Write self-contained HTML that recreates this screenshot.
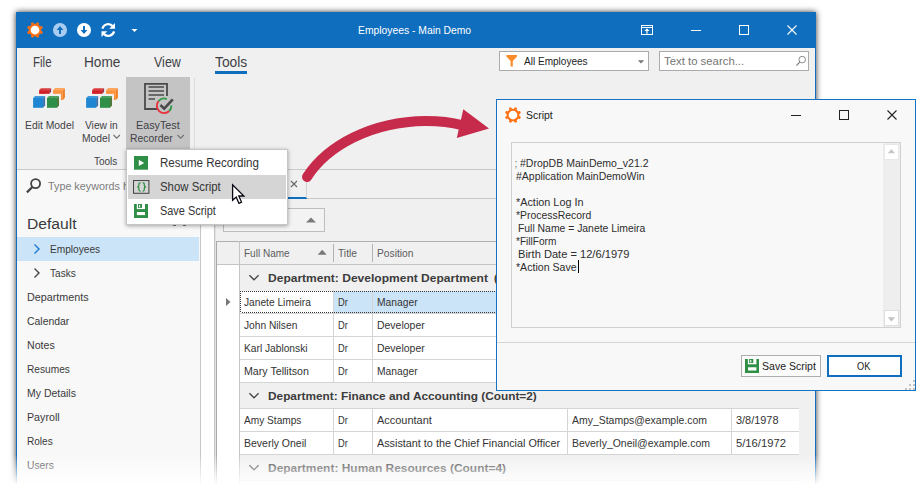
<!DOCTYPE html>
<html><head><meta charset="utf-8">
<style>
*{box-sizing:border-box;margin:0;padding:0}
html,body{width:923px;height:491px;overflow:hidden;background:#fff}
body{position:relative;font-family:"Liberation Sans",sans-serif;font-size:11px;color:#3b3b3b}
.a{position:absolute}
.t{position:absolute;white-space:nowrap;line-height:20px;height:20px;transform-origin:0 0}
#win{position:absolute;left:16px;top:12px;width:800px;height:500px;background:#f0f0f0;border-left:1px solid #106ebe;border-right:1px solid #106ebe;box-shadow:0 0 6px 0 rgba(0,0,0,.8)}
#tb{position:absolute;left:17px;top:12px;width:798px;height:36px;background:#106ebe}
.rt{font-size:13.5px;color:#333;letter-spacing:-.3px}
.rb{font-size:12px;color:#404040;letter-spacing:-.25px}
.nv{font-size:11.5px;color:#3a3a3a;letter-spacing:-.1px}
.g{font-size:11px;color:#333}
.gh{font-size:11px;color:#555}
.gb{font-size:11.5px;font-weight:bold;color:#3c3c3c}
.hl{position:absolute;height:1px;background:#d4d4d4}
.vl{position:absolute;width:1px;background:#d4d4d4}
#fade{position:absolute;left:0;top:454px;width:923px;height:37px;background:linear-gradient(to bottom,rgba(255,255,255,0) 0,rgba(255,255,255,1) 84%)}
</style></head><body>
<div id="win"></div>
<div id="tb"></div>
<!-- TITLEBAR -->

<svg class="a" style="left:24px;top:18px" width="130" height="24" viewBox="0 0 130 24">
 <!-- sun/gear -->
 <g transform="translate(11,12)"><circle r="5.350" fill="#fff" stroke="#ff6f10" stroke-width="1.950"/><g fill="#ff6f10"><polygon points="-1.600,-6 -1.050,-8.050 1.050,-8.050 1.600,-6" transform="rotate(22.5)"/><polygon points="-1.600,-6 -1.050,-8.050 1.050,-8.050 1.600,-6" transform="rotate(67.5)"/><polygon points="-1.600,-6 -1.050,-8.050 1.050,-8.050 1.600,-6" transform="rotate(112.5)"/><polygon points="-1.600,-6 -1.050,-8.050 1.050,-8.050 1.600,-6" transform="rotate(157.5)"/><polygon points="-1.600,-6 -1.050,-8.050 1.050,-8.050 1.600,-6" transform="rotate(202.5)"/><polygon points="-1.600,-6 -1.050,-8.050 1.050,-8.050 1.600,-6" transform="rotate(247.5)"/><polygon points="-1.600,-6 -1.050,-8.050 1.050,-8.050 1.600,-6" transform="rotate(292.5)"/><polygon points="-1.600,-6 -1.050,-8.050 1.050,-8.050 1.600,-6" transform="rotate(337.5)"/></g></g>
 <!-- up (disabled) -->
 <circle cx="36" cy="12" r="7" fill="#a9cdf0"/>
 <path d="M36 16V11" stroke="#106ebe" stroke-width="2" fill="none"/><polygon points="32.600,12 36,8 39.400,12" fill="#106ebe"/>
 <!-- down -->
 <circle cx="60" cy="12" r="7" fill="#fff"/>
 <path d="M60 8V13" stroke="#106ebe" stroke-width="2" fill="none"/><polygon points="56.600,12 60,16 63.400,12" fill="#106ebe"/>
 <!-- refresh -->
 <g fill="none" stroke="#fff" stroke-width="2.200"><path d="M78.400 10.600A6 6 0 0 1 88.800 8.300"/><path d="M90.100 13.400A6 6 0 0 1 79.700 15.700"/></g>
 <polygon points="91,5 91,10.800 85.200,10.800" fill="#fff"/><polygon points="77.500,19 77.500,13.200 83.300,13.200" fill="#fff"/>
 <!-- dropdown -->
 <polygon points="107.5,11 113.5,11 110.5,14" fill="#fff"/>
</svg>
<svg class="a" style="left:636px;top:18px" width="170" height="24" viewBox="0 0 170 24" fill="none" stroke="#fff">
 <rect x="5.500" y="7.500" width="11" height="9" stroke-width="1"/><path d="M5.500 9.500H16.500" stroke-width="1"/><path d="M11 15.800V11.500" stroke-width="1.200"/><polygon points="8.400,13 11,10.300 13.600,13" fill="#fff" stroke="none"/>
 <path d="M55 12.5H65" stroke-width="1"/>
 <rect x="103.5" y="7.5" width="9" height="9" stroke-width="1"/>
 <path d="M151.5 7.5L160.5 16.5M160.5 7.5L151.5 16.5" stroke-width="1.1"/>
</svg>
<!-- RIBBON TABS -->




<div class="a" style="left:215px;top:71px;width:32px;height:3px;background:#106ebe"></div>
<!-- filter combobox -->
<div class="a" style="left:499px;top:51px;width:150px;height:20px;background:#fff;border:1px solid #ababab"></div>
<svg class="a" style="left:505px;top:54px" width="14" height="14" viewBox="0 0 14 14"><path d="M1.400 1H12V2.600L7.800 7V12.600H5.600V7L1.400 2.600Z" fill="#f98b2c"/></svg>

<svg class="a" style="left:636px;top:58px" width="10" height="8"><polygon points="1.800,2.300 8.200,2.300 5,5.500" fill="#777"/></svg>
<!-- search box -->
<div class="a" style="left:659px;top:51px;width:150px;height:20px;background:#fff;border:1px solid #ababab"></div>

<svg class="a" style="left:794px;top:54px" width="14" height="14" viewBox="0 0 14 14" fill="none" stroke="#8a8a8a" stroke-width="1"><circle cx="8.200" cy="5.600" r="3.300"/><path d="M5.800 8L2.400 11.600" stroke-width="1.300"/></svg>
<!-- RIBBON BUTTONS -->
<div class="a" style="left:126px;top:77px;width:64px;height:72px;background:#c4c4c4"></div>
<div class="vl" style="left:194px;top:78px;height:88px;background:#dcdcdc"></div>






<svg class="a" style="left:112px;top:133px" width="10" height="8" fill="none" stroke="#707070" stroke-width="1.1"><path d="M1.5 2L4.7 5.2L7.9 2"/></svg>
<svg class="a" style="left:176px;top:133px" width="10" height="8" fill="none" stroke="#707070" stroke-width="1.1"><path d="M1.5 2L4.7 5.2L7.9 2"/></svg>
<!-- cubes icons -->
<svg class="a" style="left:32px;top:87px" width="34" height="22" viewBox="0 0 34 22" id="cube1">
 <g id="cubes">
<polygon points="7.1,3.1 9.0,1.2000000000000002 19.099999999999998,1.2000000000000002 17.2,3.1" fill="#da3d3c"/><polygon points="17.2,3.1 19.099999999999998,1.3000000000000003 19.099999999999998,4.8 17.2,6.9" fill="#a3283b"/><rect x="7.1" y="3.1" width="10.10" height="3.80" fill="#d01f26"/>
<polygon points="21.1,3.1 23.1,1.1 32.9,1.1 30.9,3.1" fill="#fda65c"/><polygon points="30.9,3.1 32.9,1.2000000000000002 32.9,10.8 30.9,13" fill="#f07f2a"/><rect x="21.1" y="3.1" width="9.80" height="9.90" fill="#fb933c"/>
<rect x="13.500" y="6.900" width="15.400" height="2.600" fill="#f0f0f0"/><rect x="26.500" y="6.900" width="2.400" height="12.500" fill="#f0f0f0"/>
<polygon points="1.1,20.8 1.1,11 3.1,9 13.1,9 13.1,18.6 11.1,20.8" fill="#f0f0f0" stroke="#f0f0f0" stroke-width="2.200" stroke-linejoin="round"/><polygon points="1.1,11 3.1,9 13.1,9 11.1,11" fill="#3d99dc"/><polygon points="11.1,11 13.1,9.1 13.1,18.6 11.1,20.8" fill="#3a70a8"/><rect x="1.1" y="11" width="10.00" height="9.80" fill="#1f87d1"/>
<polygon points="15,20.8 15,11 17,9 27,9 27,18.6 25,20.8" fill="#f0f0f0" stroke="#f0f0f0" stroke-width="2.200" stroke-linejoin="round"/><polygon points="15,11 17,9 27,9 25,11" fill="#4ba25e"/><polygon points="25,11 27,9.1 27,18.6 25,20.8" fill="#4f7a3c"/><rect x="15" y="11" width="10.00" height="9.80" fill="#2f8f48"/>
 </g>
</svg>
<svg class="a" style="left:85px;top:87px" width="34" height="22" viewBox="0 0 34 22"><use href="#cubes"/></svg>
<!-- easytest icon -->
<svg class="a" style="left:140px;top:80px" width="36" height="36" viewBox="0 0 36 36" fill="none">
 <path d="M17 29H5V3.800H27V16" stroke="#4a4a4a" stroke-width="1.800"/>
 <path d="M8.500 7H24M8.500 11H24M8.500 15H24M8.500 19H15" stroke="#4a4a4a" stroke-width="1.700"/>
 <path d="M29.26 30.96A7.3 7.3 0 0 1 18.59 21.01" stroke="#e8323c" stroke-width="1.900"/>
 <path d="M18.59 21.01A7.3 7.3 0 0 1 26.83 19.03" stroke="#2f9a48" stroke-width="1.900"/>
 <path d="M31.40 25.55A7.3 7.3 0 0 1 29.26 30.96" stroke="#2f9a48" stroke-width="1.900"/>
 <path d="M20.400 25L24.200 28.600L32.800 19.400" stroke="#4a4a4a" stroke-width="2.600"/>
</svg>
<div class="hl" style="left:17px;top:169px;width:798px;background:#c9c9c9"></div>
<!-- NAV PANEL -->
<div class="a" style="left:17px;top:170px;width:183px;height:330px;background:#f8f8f8"></div>
<div class="vl" style="left:200px;top:170px;height:330px;background:#c6c6c6"></div>
<div class="a" style="left:201px;top:170px;width:13px;height:330px;background:#fff"></div>
<div class="vl" style="left:214px;top:170px;height:330px;background:#c6c6c6"></div>
<div class="vl" style="left:215px;top:170px;height:330px;background:#e2e2e2"></div>
<svg class="a" style="left:25px;top:177px" width="18" height="18" viewBox="0 0 18 18" fill="none" stroke="#444" stroke-width="1.800"><circle cx="10.600" cy="6.600" r="4.500"/><path d="M7.400 10L1.900 15.400" stroke-width="2.300"/></svg>


<div class="a" style="left:17px;top:237px;width:182px;height:24px;background:#cce4f7"></div>
<svg class="a" style="left:32px;top:243px" width="10" height="12" fill="none" stroke="#1b7ad3" stroke-width="1.4"><path d="M2.5 1.5L7 6L2.5 10.5"/></svg>
<svg class="a" style="left:32px;top:267px" width="10" height="12" fill="none" stroke="#444" stroke-width="1.4"><path d="M2.5 1.5L7 6L2.5 10.5"/></svg>










<!-- DOC AREA -->
<div class="hl" style="left:216px;top:198px;width:599px;background:#c9c9c9"></div>
<div class="a" style="left:216px;top:197px;width:91px;height:2px;background:#106ebe"></div>
<div class="vl" style="left:306px;top:172px;height:26px;background:#d0d0d0"></div>
<svg class="a" style="left:289px;top:179px" width="10" height="10" fill="none" stroke="#666" stroke-width="1.1"><path d="M2 2L8 8M8 2L2 8"/></svg>
<div class="a" style="left:223px;top:208px;width:102px;height:24px;border:1px solid #bdbdbd;background:#f3f3f3"></div>
<svg class="a" style="left:305px;top:216px" width="12" height="8"><polygon points="1,6.5 11,6.5 6,1.5" fill="#7a7a7a"/></svg>
<!-- GRID -->
<div class="a" style="left:217px;top:241px;width:582px;height:260px;background:#fff"></div>
<div class="a" style="left:217px;top:241px;width:582px;height:23px;background:#f0f0f0"></div>
<div class="a" style="left:217px;top:264px;width:23px;height:240px;background:#fff"></div>
<div class="a" style="left:240px;top:264px;width:559px;height:27px;background:#f0f0f0"></div>
<div class="a" style="left:240px;top:382px;width:559px;height:26px;background:#f0f0f0"></div>
<div class="a" style="left:240px;top:454px;width:559px;height:26px;background:#f0f0f0"></div>
<div class="a" style="left:333px;top:291px;width:466px;height:22px;background:#cce4f7"></div>
<div class="hl" style="left:217px;top:241px;width:582px;background:#b0b0b0"></div>
<div class="hl" style="left:217px;top:264px;width:582px;background:#c4c4c4"></div>
<div class="hl" style="left:240px;top:313px;width:559px"></div>
<div class="hl" style="left:240px;top:336px;width:559px"></div>
<div class="hl" style="left:240px;top:359px;width:559px"></div>
<div class="hl" style="left:240px;top:382px;width:559px"></div>
<div class="hl" style="left:240px;top:408px;width:559px"></div>
<div class="hl" style="left:240px;top:431px;width:559px"></div>
<div class="hl" style="left:240px;top:454px;width:559px"></div>
<div class="hl" style="left:240px;top:480px;width:559px"></div>
<div class="vl" style="left:216px;top:241px;height:260px;background:#a9a9a9"></div>
<div class="vl" style="left:239px;top:241px;height:260px;background:#c4c4c4"></div>
<div class="vl" style="left:333px;top:244px;height:18px;background:#b2b2b2"></div>
<div class="vl" style="left:372px;top:244px;height:18px;background:#b2b2b2"></div>
<div class="vl" style="left:333px;top:290px;height:92px"></div>
<div class="vl" style="left:372px;top:290px;height:92px"></div>
<div class="vl" style="left:333px;top:408px;height:46px"></div>
<div class="vl" style="left:372px;top:408px;height:46px"></div>
<div class="vl" style="left:567px;top:408px;height:46px"></div>
<div class="vl" style="left:731px;top:408px;height:46px"></div>
<div class="a" style="left:240px;top:291px;width:559px;height:1px;background:repeating-linear-gradient(to right,#3a3a3a 0 1px,transparent 1px 2px)"></div>
<div class="a" style="left:240px;top:312px;width:559px;height:1px;background:repeating-linear-gradient(to right,#3a3a3a 0 1px,transparent 1px 2px)"></div>
<div class="a" style="left:240px;top:291px;width:1px;height:22px;background:repeating-linear-gradient(to bottom,#3a3a3a 0 1px,#fff 1px 2px)"></div>
<svg class="a" style="left:224px;top:297px" width="8" height="10"><polygon points="2,1 6.5,5 2,9" fill="#777"/></svg>
<svg class="a" style="left:317px;top:248px" width="12" height="8"><polygon points=".700,6.800 9.700,6.800 5.200,1.800" fill="#777"/></svg>



<svg class="a" style="left:248px;top:273px" width="12" height="10" fill="none" stroke="#444" stroke-width="1.300"><path d="M1.400 2.200L6 6.800L10.600 2.200"/></svg>
<svg class="a" style="left:248px;top:391px" width="12" height="10" fill="none" stroke="#444" stroke-width="1.300"><path d="M1.400 2.200L6 6.800L10.600 2.200"/></svg>
<svg class="a" style="left:248px;top:463px" width="12" height="10" fill="none" stroke="#444" stroke-width="1.300"><path d="M1.400 2.200L6 6.800L10.600 2.200"/></svg>









<div class="a" style="left:173px;top:225px;width:3px;height:1px;background:#777"></div><div class="a" style="left:183px;top:225px;width:3px;height:1px;background:#777"></div>
<div class="t" style="left:358.00px;top:20.19px;font-size:11.0px;color:#fff;transform:scaleX(0.9392)">Employees - Main Demo</div>
<div class="t" style="left:32.61px;top:51.98px;font-size:14.5px;color:#3f3f46;transform:scaleX(0.7937)">File</div>
<div class="t" style="left:84.06px;top:51.98px;font-size:14.5px;color:#3f3f46;transform:scaleX(0.9411)">Home</div>
<div class="t" style="left:153.90px;top:51.98px;font-size:14.5px;color:#3f3f46;transform:scaleX(0.8613)">View</div>
<div class="t" style="left:215.00px;top:51.98px;font-size:14.5px;color:#3f3f46;transform:scaleX(0.9524)">Tools</div>
<div class="t" style="left:523.80px;top:51.19px;font-size:11.0px;color:#222;transform:scaleX(0.9132)">All Employees</div>
<div class="t" style="left:663.90px;top:51.19px;font-size:11.0px;color:#757575;transform:scaleX(1.0324)">Text to search...</div>
<div class="t" style="left:24.80px;top:115.11px;font-size:11.8px;color:#3f3f46;transform:scaleX(0.8782)">Edit Model</div>
<div class="t" style="left:84.90px;top:115.11px;font-size:11.8px;color:#3f3f46;transform:scaleX(0.8643)">View in</div>
<div class="t" style="left:81.80px;top:128.21px;font-size:11.8px;color:#3f3f46;transform:scaleX(0.8728)">Model</div>
<div class="t" style="left:135.60px;top:115.11px;font-size:11.8px;color:#3f3f46;transform:scaleX(0.9118)">EasyTest</div>
<div class="t" style="left:129.70px;top:128.21px;font-size:11.8px;color:#3f3f46;transform:scaleX(0.8788)">Recorder</div>
<div class="t" style="left:93.70px;top:150.91px;font-size:11.8px;color:#3f3f46;transform:scaleX(0.8466)">Tools</div>
<div class="t" style="left:48.10px;top:175.91px;font-size:11.8px;color:#7c7c7c;transform:scaleX(0.9141)">Type keywords here</div>
<div class="t" style="left:26.56px;top:214.17px;font-size:15.1px;color:#3a3a3a;transform:scaleX(1.0351)">Default</div>
<div class="t" style="left:49.50px;top:239.19px;font-size:11.0px;color:#3a3a3a;transform:scaleX(0.9214)">Employees</div>
<div class="t" style="left:50.00px;top:263.19px;font-size:11.0px;color:#3a3a3a;transform:scaleX(0.9155)">Tasks</div>
<div class="t" style="left:26.60px;top:287.19px;font-size:11.0px;color:#3a3a3a;transform:scaleX(0.9784)">Departments</div>
<div class="t" style="left:26.60px;top:311.19px;font-size:11.0px;color:#3a3a3a;transform:scaleX(0.9472)">Calendar</div>
<div class="t" style="left:26.60px;top:335.19px;font-size:11.0px;color:#3a3a3a;transform:scaleX(0.9646)">Notes</div>
<div class="t" style="left:26.60px;top:359.19px;font-size:11.0px;color:#3a3a3a;transform:scaleX(0.9242)">Resumes</div>
<div class="t" style="left:26.60px;top:383.19px;font-size:11.0px;color:#3a3a3a;transform:scaleX(0.9529)">My Details</div>
<div class="t" style="left:26.60px;top:407.19px;font-size:11.0px;color:#3a3a3a;transform:scaleX(0.9705)">Payroll</div>
<div class="t" style="left:26.60px;top:431.19px;font-size:11.0px;color:#3a3a3a;transform:scaleX(0.9153)">Roles</div>
<div class="t" style="left:26.60px;top:455.19px;font-size:11.0px;color:#3a3a3a;transform:scaleX(0.9376)">Users</div>
<div class="t" style="left:243.70px;top:243.19px;font-size:11.0px;color:#5c5c5c;transform:scaleX(0.9099)">Full Name</div>
<div class="t" style="left:338.20px;top:243.19px;font-size:11.0px;color:#5c5c5c;transform:scaleX(0.9282)">Title</div>
<div class="t" style="left:376.60px;top:243.19px;font-size:11.0px;color:#5c5c5c;transform:scaleX(0.9329)">Position</div>
<div class="t" style="left:268.30px;top:268.19px;font-size:11.0px;color:#3c3c3c;transform:scaleX(1.0937);font-weight:700">Department: Development Department</div>
<div class="t" style="left:493.80px;top:268.19px;font-size:11.0px;color:#3c3c3c;transform:scaleX(1.0044);font-weight:700">(Count=4)</div>
<div class="t" style="left:268.30px;top:386.19px;font-size:11.0px;color:#3c3c3c;transform:scaleX(1.0758);font-weight:700">Department: Finance and Accounting (Count=2)</div>
<div class="t" style="left:268.30px;top:458.19px;font-size:11.0px;color:#3c3c3c;transform:scaleX(1.0863);font-weight:700">Department: Human Resources (Count=4)</div>
<div class="t" style="left:244.30px;top:292.19px;font-size:11.0px;color:#333;transform:scaleX(0.9270)">Janete Limeira</div>
<div class="t" style="left:338.20px;top:292.19px;font-size:11.0px;color:#333;transform:scaleX(0.8456)">Dr</div>
<div class="t" style="left:376.60px;top:292.19px;font-size:11.0px;color:#333;transform:scaleX(0.9348)">Manager</div>
<div class="t" style="left:244.30px;top:315.19px;font-size:11.0px;color:#333;transform:scaleX(0.9275)">John Nilsen</div>
<div class="t" style="left:338.20px;top:315.19px;font-size:11.0px;color:#333;transform:scaleX(0.8456)">Dr</div>
<div class="t" style="left:376.60px;top:315.19px;font-size:11.0px;color:#333;transform:scaleX(0.9509)">Developer</div>
<div class="t" style="left:244.30px;top:338.19px;font-size:11.0px;color:#333;transform:scaleX(0.9275)">Karl Jablonski</div>
<div class="t" style="left:338.20px;top:338.19px;font-size:11.0px;color:#333;transform:scaleX(0.8456)">Dr</div>
<div class="t" style="left:376.60px;top:338.19px;font-size:11.0px;color:#333;transform:scaleX(0.9509)">Developer</div>
<div class="t" style="left:244.30px;top:361.19px;font-size:11.0px;color:#333;transform:scaleX(0.9669)">Mary Tellitson</div>
<div class="t" style="left:338.20px;top:361.19px;font-size:11.0px;color:#333;transform:scaleX(0.8456)">Dr</div>
<div class="t" style="left:376.60px;top:361.19px;font-size:11.0px;color:#333;transform:scaleX(0.9348)">Manager</div>
<div class="t" style="left:244.30px;top:410.19px;font-size:11.0px;color:#333;transform:scaleX(0.9213)">Amy Stamps</div>
<div class="t" style="left:338.20px;top:410.19px;font-size:11.0px;color:#333;transform:scaleX(0.8456)">Dr</div>
<div class="t" style="left:376.60px;top:410.19px;font-size:11.0px;color:#333;transform:scaleX(0.9967)">Accountant</div>
<div class="t" style="left:571.70px;top:410.19px;font-size:11.0px;color:#333;transform:scaleX(0.9505)">Amy_Stamps@example.com</div>
<div class="t" style="left:736.40px;top:410.19px;font-size:11.0px;color:#333;transform:scaleX(0.9930)">3/8/1978</div>
<div class="t" style="left:244.30px;top:433.19px;font-size:11.0px;color:#333;transform:scaleX(0.9527)">Beverly Oneil</div>
<div class="t" style="left:338.20px;top:433.19px;font-size:11.0px;color:#333;transform:scaleX(0.8456)">Dr</div>
<div class="t" style="left:376.60px;top:433.19px;font-size:11.0px;color:#333;transform:scaleX(0.9828)">Assistant to the Chief Financial Officer</div>
<div class="t" style="left:571.70px;top:433.19px;font-size:11.0px;color:#333;transform:scaleX(0.9510)">Beverly_Oneil@example.com</div>
<div class="t" style="left:736.40px;top:433.19px;font-size:11.0px;color:#333;transform:scaleX(1.0201)">5/16/1972</div>
<!-- POPUP MENU -->
<div class="a" style="left:126px;top:149px;width:162px;height:76px;background:#fff;border:1px solid #c6c6c6;box-shadow:0 1px 4px rgba(0,0,0,.35)"></div>
<div class="a" style="left:128px;top:175px;width:158px;height:24px;background:#d5d5d5"></div>
<svg class="a" style="left:134px;top:156px" width="14" height="14"><rect width="14" height="13.700" fill="#2f8f46"/><polygon points="4.800,3.800 10.200,6.900 4.800,10" fill="#fff"/></svg>
<svg class="a" style="left:133px;top:180px" width="17" height="14" fill="none"><rect x=".5" y=".5" width="15.400" height="12.800" stroke="#4a4a4a" stroke-width="1.100"/><path d="M7.600 2.800H7Q5.900 2.800 5.900 4V5.600Q5.900 6.900 4.200 6.900Q5.900 6.900 5.900 8.200V9.800Q5.900 11 7 11H7.600M9.600 2.800H10.200Q11.300 2.800 11.300 4V5.600Q11.300 6.900 13 6.900Q11.300 6.900 11.300 8.200V9.800Q11.300 11 10.200 11H9.600" stroke="#2f8f46" stroke-width="1.250"/></svg>
<svg class="a" style="left:134px;top:204px" width="14" height="14"><rect x="0" y="0" width="14" height="14" fill="#2f8f46"/><rect x="2.800" y="0" width="8.200" height="5.100" fill="#fff"/><rect x="4" y="0" width="4" height="3.900" fill="#2f8f46"/><rect x="5" y="1" width="1.100" height="2.300" fill="#fff"/><rect x="2.900" y="8" width="8.100" height="3.100" fill="#fff"/></svg>
<div class="t" style="left:160.00px;top:152.84px;font-size:12.0px;color:#333;transform:scaleX(0.9633)">Resume Recording</div>
<div class="t" style="left:160.00px;top:176.84px;font-size:12.0px;color:#333;transform:scaleX(0.9491)">Show Script</div>
<div class="t" style="left:160.00px;top:200.84px;font-size:12.0px;color:#333;transform:scaleX(0.9093)">Save Script</div>
<!-- CURSOR -->
<svg class="a" style="left:230px;top:183px" width="18" height="24" viewBox="0 0 18 24"><path d="M2.600 1.700V17.300L6.200 14L8.900 20.300L11.500 19.100L8.800 13H13.900Z" fill="#fff" stroke="#0a0a14" stroke-width="1.300" stroke-linejoin="miter"/></svg>
<!-- ARROW -->
<svg class="a" style="left:280px;top:90px" width="230" height="110" viewBox="280 90 230 110" fill="none">
 <path d="M307 177C327 146 371 121.500 426 121C441 121 452 122.500 462 125.200" stroke="#c72b4b" stroke-width="10" stroke-linecap="round"/>
 <polygon points="463.300,109.300 489,128.600 456.800,138" fill="#c72b4b"/>
</svg>
<!-- SCRIPT DIALOG -->
<div class="a" style="left:496px;top:99px;width:420px;height:292px;background:#f8f8f8;border:1px solid #1573c4"></div>
<svg class="a" style="left:503px;top:105px" width="20" height="20" viewBox="-10 -10 20 20"><circle r="5.350" fill="#fff" stroke="#ff6f10" stroke-width="1.950"/><g fill="#ff6f10"><polygon points="-1.600,-6 -1.050,-8.050 1.050,-8.050 1.600,-6" transform="rotate(22.5)"/><polygon points="-1.600,-6 -1.050,-8.050 1.050,-8.050 1.600,-6" transform="rotate(67.5)"/><polygon points="-1.600,-6 -1.050,-8.050 1.050,-8.050 1.600,-6" transform="rotate(112.5)"/><polygon points="-1.600,-6 -1.050,-8.050 1.050,-8.050 1.600,-6" transform="rotate(157.5)"/><polygon points="-1.600,-6 -1.050,-8.050 1.050,-8.050 1.600,-6" transform="rotate(202.5)"/><polygon points="-1.600,-6 -1.050,-8.050 1.050,-8.050 1.600,-6" transform="rotate(247.5)"/><polygon points="-1.600,-6 -1.050,-8.050 1.050,-8.050 1.600,-6" transform="rotate(292.5)"/><polygon points="-1.600,-6 -1.050,-8.050 1.050,-8.050 1.600,-6" transform="rotate(337.5)"/></g></svg>

<svg class="a" style="left:786px;top:105px" width="120" height="20" fill="none" stroke="#222">
 <path d="M5 10.500H15" stroke-width="1"/><rect x="53.500" y="5.500" width="9" height="9" stroke-width="1"/><path d="M101.500 5.500L110.500 14.500M110.500 5.500L101.500 14.500" stroke-width="1.100"/>
</svg>
<div class="a" style="left:511px;top:142px;width:390px;height:186px;background:#f8f8f8;border:1px solid #d0d0d0"></div>
<div class="a" style="left:883px;top:143px;width:17px;height:184px;background:#eeeeee"></div>
<div class="a" style="left:884px;top:144px;width:15px;height:16px;background:#fff;border:1px solid #e8e8e8"></div>
<div class="a" style="left:884px;top:310px;width:15px;height:16px;background:#fff;border:1px solid #dedede"></div>
<svg class="a" style="left:886px;top:148px" width="10" height="6"><polygon points="1.700,5.200 9.100,5.200 5.400,1" fill="#c8c8c8"/></svg>
<svg class="a" style="left:886px;top:316px" width="10" height="7"><polygon points="1.700,1.200 9.100,1.200 5.400,5.400" fill="#c2c2c2"/></svg>








<div class="vl" style="left:578px;top:260px;height:13px;background:#000"></div>
<div class="hl" style="left:497px;top:342px;width:418px;background:#d6d6d6"></div>
<div class="a" style="left:741px;top:355px;width:80px;height:22px;background:#fbfbfb;border:1px solid #adadad"></div>
<svg class="a" style="left:744.500px;top:358.500px" width="14.500" height="14.500" viewBox="0 0 14 14"><rect x="0" y="0" width="14" height="14" fill="#2f8f46"/><rect x="2.800" y="0" width="8.200" height="5.100" fill="#fff"/><rect x="4" y="0" width="4" height="3.900" fill="#2f8f46"/><rect x="5" y="1" width="1.100" height="2.300" fill="#fff"/><rect x="2.900" y="8" width="8.100" height="3.100" fill="#fff"/></svg>

<div class="a" style="left:827px;top:355px;width:75px;height:22px;background:#fff;border:2px solid #106ebe"></div>

<svg class="a" style="left:905px;top:380px" width="12" height="12" fill="#c2c2c2"><rect x="8" y="0" width="2" height="2"/><rect x="8" y="4" width="2" height="2"/><rect x="4" y="4" width="2" height="2"/><rect x="8" y="8" width="2" height="2"/><rect x="4" y="8" width="2" height="2"/><rect x="0" y="8" width="2" height="2"/></svg>

<div class="t" style="left:525.60px;top:105.19px;font-size:11.0px;color:#222;transform:scaleX(0.9515)">Script</div>
<div class="t" style="left:515.40px;top:153.19px;font-size:11.0px;color:#2d2d2d;transform:scaleX(0.6333)">;</div>
<div class="t" style="left:520.20px;top:153.19px;font-size:11.0px;color:#2d2d2d;transform:scaleX(0.9554)">#DropDB MainDemo_v21.2</div>
<div class="t" style="left:516.00px;top:166.19px;font-size:11.0px;color:#2d2d2d;transform:scaleX(0.9519)">#Application MainDemoWin</div>
<div class="t" style="left:516.00px;top:192.19px;font-size:11.0px;color:#2d2d2d;transform:scaleX(0.9857)">*Action Log In</div>
<div class="t" style="left:516.00px;top:205.19px;font-size:11.0px;color:#2d2d2d;transform:scaleX(0.9463)">*ProcessRecord</div>
<div class="t" style="left:518.00px;top:218.19px;font-size:11.0px;color:#2d2d2d;transform:scaleX(0.9441)">Full Name = Janete Limeira</div>
<div class="t" style="left:516.00px;top:231.19px;font-size:11.0px;color:#2d2d2d;transform:scaleX(0.9171)">*FillForm</div>
<div class="t" style="left:518.00px;top:244.19px;font-size:11.0px;color:#2d2d2d;transform:scaleX(1.0094)">Birth Date = 12/6/1979</div>
<div class="t" style="left:516.00px;top:257.19px;font-size:11.0px;color:#2d2d2d;transform:scaleX(0.9624)">*Action Save</div>
<div class="t" style="left:762.40px;top:356.19px;font-size:11.0px;color:#222;transform:scaleX(0.9575)">Save Script</div>
<div class="t" style="left:856.70px;top:356.19px;font-size:11.0px;color:#222;transform:scaleX(0.8396)">OK</div>
<div id="fade"></div>
</body></html>
